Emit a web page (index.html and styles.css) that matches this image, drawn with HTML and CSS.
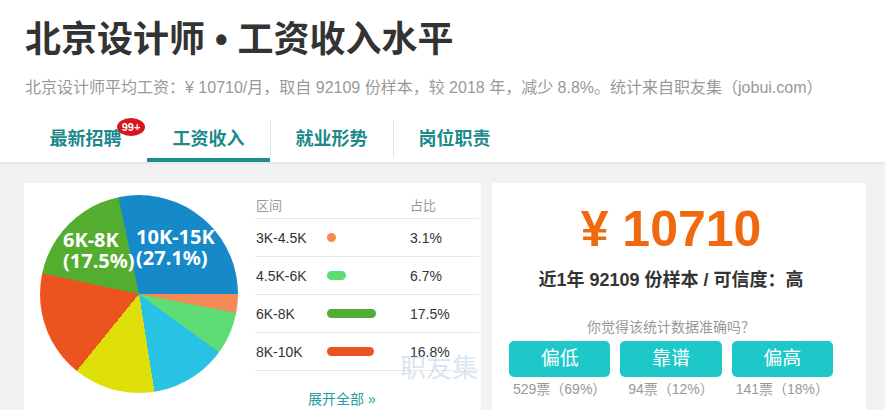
FILE: index.html
```html
<!DOCTYPE html>
<html lang="zh-CN">

<head>
    <meta charset="UTF-8">
    <meta name="viewport" content="width=device-width, initial-scale=1.0">
    <title>北京设计师工资收入水平</title>
    <link rel="stylesheet" href="styles.css">
</head>

<body>
    <header class="top">
        <h1 class="title">北京设计师 • 工资收入水平</h1>
        <p class="sub">北京设计师平均工资：¥ 10710/月，取自 92109 份样本，较 2018 年，减少 8.8%。统计来自职友集（jobui.com）</p>
        <nav class="tabs">
            <a class="tab">最新招聘<span class="badge">99+</span></a>
            <a class="tab on">工资收入</a>
            <a class="tab sep">就业形势</a>
            <a class="tab sep">岗位职责</a>
        </nav>
    </header>

    <main class="panel">
        <section class="card dist">
            <div class="pie">
                <span class="pie-label l1">6K-8K<br>(17.5%)</span>
                <span class="pie-label l2">10K-15K<br>(27.1%)</span>
            </div>
            <div class="table">
                <div class="row head"><span>区间</span><span></span><span>占比</span></div>
                <div class="row"><span>3K-4.5K</span><span><i class="bar c1" style="width:8.7px"></i></span><span>3.1%</span></div>
                <div class="row"><span>4.5K-6K</span><span><i class="bar c2" style="width:18.8px"></i></span><span>6.7%</span></div>
                <div class="row"><span>6K-8K</span><span><i class="bar c3" style="width:49px"></i></span><span>17.5%</span></div>
                <div class="row"><span>8K-10K</span><span><i class="bar c4" style="width:47px"></i></span><span>16.8%</span></div>
                <a class="more">展开全部 »</a>
            </div>
            <span class="mark">职友集</span>
        </section>

        <section class="card avg">
            <div class="price">¥ 10710</div>
            <div class="summary">近1年 92109 份样本 / 可信度：高</div>
            <div class="ask">你觉得该统计数据准确吗？</div>
            <div class="votes">
                <div class="vote"><a class="btn">偏低</a><span class="count">529票（69%）</span></div>
                <div class="vote"><a class="btn">靠谱</a><span class="count">94票（12%）</span></div>
                <div class="vote"><a class="btn">偏高</a><span class="count">141票（18%）</span></div>
            </div>
        </section>
    </main>
</body>

</html>
```

FILE: styles.css
```css
body {
    margin: 0;
    height: 410px;
    overflow: hidden;
    background-color: #f2f2f2;
    font-family: "Liberation Sans", "Noto Sans CJK SC", sans-serif;
    color: #333;
}

/* 顶部标题和标签 */
.top {
    position: relative;
    padding: 18px 25px 0;
    background-color: #fff;
    box-shadow: 0 1px 3px rgba(0, 0, 0, 0.08);
}

.title {
    margin: 0;
    font-size: 36px;
    line-height: 44px;
    font-weight: bold;
    color: #333;
}

.sub {
    margin: 14px 0 0;
    font-size: 16px;
    line-height: 24px;
    color: #999;
}

.tabs {
    display: flex;
    margin: 14px 0 0 -1px;
}

.tab {
    position: relative;
    width: 123px;
    padding-top: 6px;
    line-height: 38px;
    text-align: center;
    font-size: 18px;
    font-weight: bold;
    color: #1b8a8b;
    border-bottom: 4px solid transparent;
}

.tab.on {
    border-bottom-color: #1a8d8d;
}

.tab.sep::before {
    content: "";
    position: absolute;
    left: 0;
    top: 6px;
    width: 1px;
    height: 38px;
    background-color: #e8e8e8;
}

.badge {
    position: absolute;
    left: 93px;
    top: 4px;
    width: 28px;
    height: 18px;
    border-radius: 50%;
    background-color: #d8161d;
    color: #fff;
    font-size: 11px;
    line-height: 18px;
    font-weight: bold;
    text-align: center;
}

/* 下方内容 */
.panel {
    display: flex;
    padding: 21px 0 0 24px;
}

.card {
    background-color: #fff;
    height: 260px;
}

.dist {
    position: relative;
    display: flex;
    width: 457px;
}

.pie {
    position: relative;
    width: 198px;
    height: 198px;
    margin: 12px 0 0 16px;
    border-radius: 50%;
    background: conic-gradient(from 90deg,
            #f58a56 0 11deg,
            #5fdc73 11deg 36deg,
            #27c2e4 36deg 81deg,
            #dfe00a 81deg 129deg,
            #eb531f 129deg 192deg,
            #54ad2f 192deg 258deg,
            #1689c9 258deg 360deg);
}

.pie-label {
    position: absolute;
    font-family: "Noto Sans", sans-serif;
    font-size: 20px;
    line-height: 21px;
    font-weight: bold;
    color: #fff;
    white-space: nowrap;
}

.l1 {
    left: 23px;
    top: 34px;
}

.l2 {
    left: 96px;
    top: 31px;
}

.table {
    width: 224px;
    margin-left: 17px;
    padding-top: 8px;
}

.row {
    display: grid;
    grid-template-columns: 71px 83px 1fr;
    align-items: center;
    box-sizing: border-box;
    height: 38px;
    padding-left: 1px;
    border-bottom: 1px solid #e8e8e8;
    font-size: 14px;
}

.row.head {
    height: 28px;
    font-size: 13px;
    color: #999;
}

.bar {
    display: block;
    height: 9px;
    border-radius: 5px;
}

.c1 { background-color: #f58a56; }
.c2 { background-color: #5fdc73; }
.c3 { background-color: #4fae33; }
.c4 { background-color: #eb531f; }

.more {
    display: block;
    margin: 17px 0 0 53px;
    font-size: 14px;
    line-height: 22px;
    color: #2a9d9d;
}

.mark {
    position: absolute;
    left: 376px;
    top: 168px;
    font-family: "Noto Sans CJK SC", sans-serif;
    font-size: 26px;
    line-height: 30px;
    color: rgba(170, 200, 225, 0.45);
}

.avg {
    width: 374px;
    margin-left: 11px;
    box-sizing: border-box;
    padding: 18px 33px 0 17px;
    text-align: center;
}

.price {
    font-size: 50px;
    line-height: 56px;
    font-weight: bold;
    color: #f0690f;
}

.summary {
    margin-top: 10px;
    font-size: 18px;
    line-height: 26px;
    font-weight: bold;
    color: #333;
}

.ask {
    margin-top: 24px;
    font-size: 14px;
    line-height: 20px;
    color: #999;
}

.votes {
    display: grid;
    grid-template-columns: repeat(3, 1fr);
    gap: 10px;
    margin-top: 4px;
}

.btn {
    display: block;
    height: 36px;
    line-height: 36px;
    border-radius: 5px;
    background-color: #1ec8c9;
    color: #fff;
    font-size: 19px;
}

.count {
    display: block;
    margin-top: 2px;
    font-size: 14px;
    line-height: 20px;
    color: #999;
}
```
